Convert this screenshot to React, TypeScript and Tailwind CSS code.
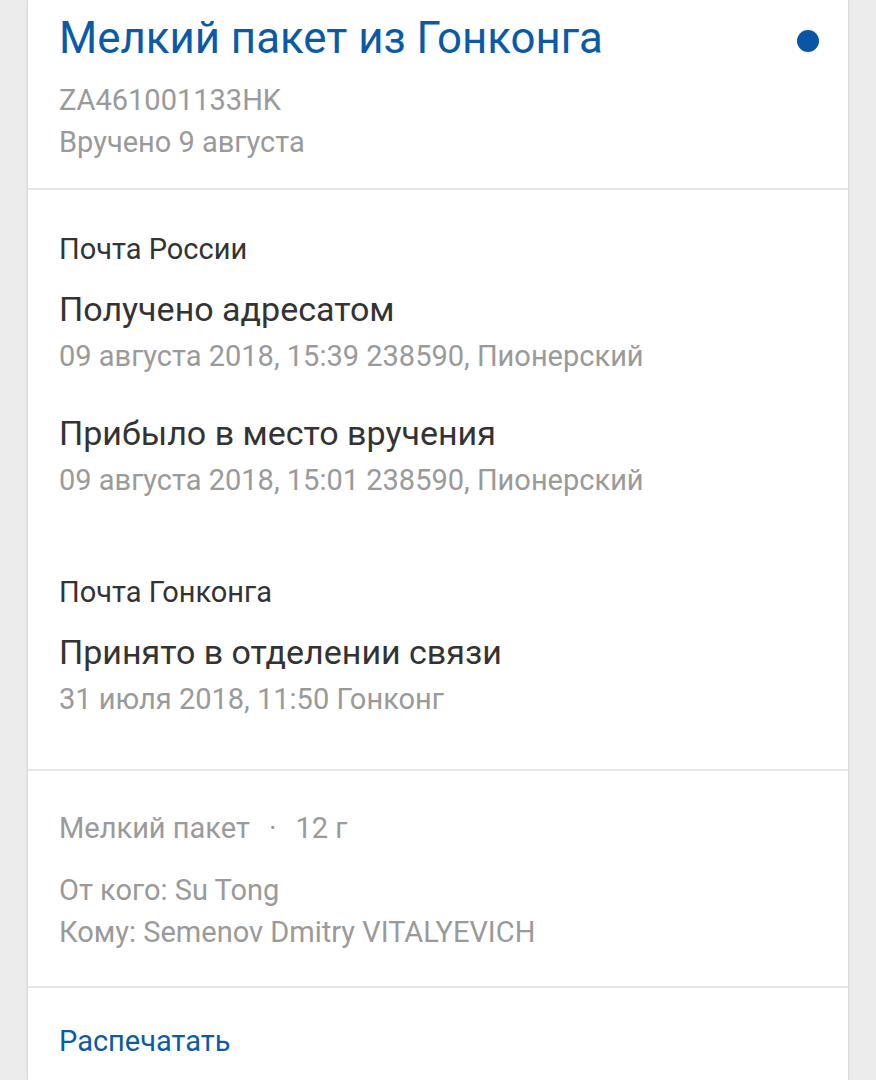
import React from 'react';

type TrackEvent = { status: string; details: string };
type Carrier = { name: string; events: TrackEvent[] };

const carriers: Carrier[] = [
  {
    name: 'Почта России',
    events: [
      { status: 'Получено адресатом', details: '09 августа 2018, 15:39 238590, Пионерский' },
      { status: 'Прибыло в место вручения', details: '09 августа 2018, 15:01 238590, Пионерский' },
    ],
  },
  {
    name: 'Почта Гонконга',
    events: [{ status: 'Принято в отделении связи', details: '31 июля 2018, 11:50 Гонконг' }],
  },
];

const App: React.FC = () => {
  return (
    <div className="min-h-[1080px] h-[1080px] overflow-hidden bg-[#ececec] font-['Roboto',sans-serif]">
      <div className="ml-[28px] w-[820px] h-full bg-white shadow-[0_0_3px_rgba(0,0,0,0.18)]">
        {/* Header */}
        <div className="pl-[31px] pr-[28px] pt-[12px] pb-[25px] border-b-2 border-[#e6e6e6]">
          <div className="flex items-start justify-between">
            <h1 className="text-[43.8px] leading-[52px] text-[#0b5aa8]">Мелкий пакет из Гонконга</h1>
            <span className="mt-[18px] w-[22px] h-[22px] rounded-full bg-[#0a56a6] mr-[1px]"></span>
          </div>
          <div className="mt-[15px] text-[29px] leading-[42px] text-[#9a9a9a]">
            <p>ZA461001133HK</p>
            <p>Вручено 9 августа</p>
          </div>
        </div>

        {/* Tracking history */}
        <div className="pl-[31px] pt-[41px] pb-[52px] border-b-2 border-[#e6e6e6]">
          {carriers.map((c, i) => (
            <div key={c.name} className={i > 0 ? 'mt-[76px]' : ''}>
              <p className="text-[29px] leading-[36px] text-[#333333]">{c.name}</p>
              {c.events.map((e, j) => (
                <div key={j} className={j > 0 ? 'mt-[39px]' : 'mt-[22px]'}>
                  <p className="text-[34px] leading-[40px] text-[#333333]">{e.status}</p>
                  <p className="mt-[9px] text-[29px] leading-[36px] text-[#9a9a9a]">{e.details}</p>
                </div>
              ))}
            </div>
          ))}
        </div>

        {/* Parcel info */}
        <div className="pl-[31px] pt-[39px] pb-[36px] border-b-2 border-[#e6e6e6] text-[29px] leading-[36px] text-[#9a9a9a]">
          <p className="flex">
            <span>Мелкий пакет</span>
            <span className="mx-[19px]">·</span>
            <span>12 г</span>
          </p>
          <p className="mt-[26px]">От кого: Su Tong</p>
          <p className="mt-[6px]">Кому: Semenov Dmitry VITALYEVICH</p>
        </div>

        {/* Actions */}
        <div className="pl-[31px] pt-[35px]">
          <button className="text-[29px] leading-[36px] text-[#0b5aa8]">Распечатать</button>
        </div>
      </div>
    </div>
  );
};

export default App;
